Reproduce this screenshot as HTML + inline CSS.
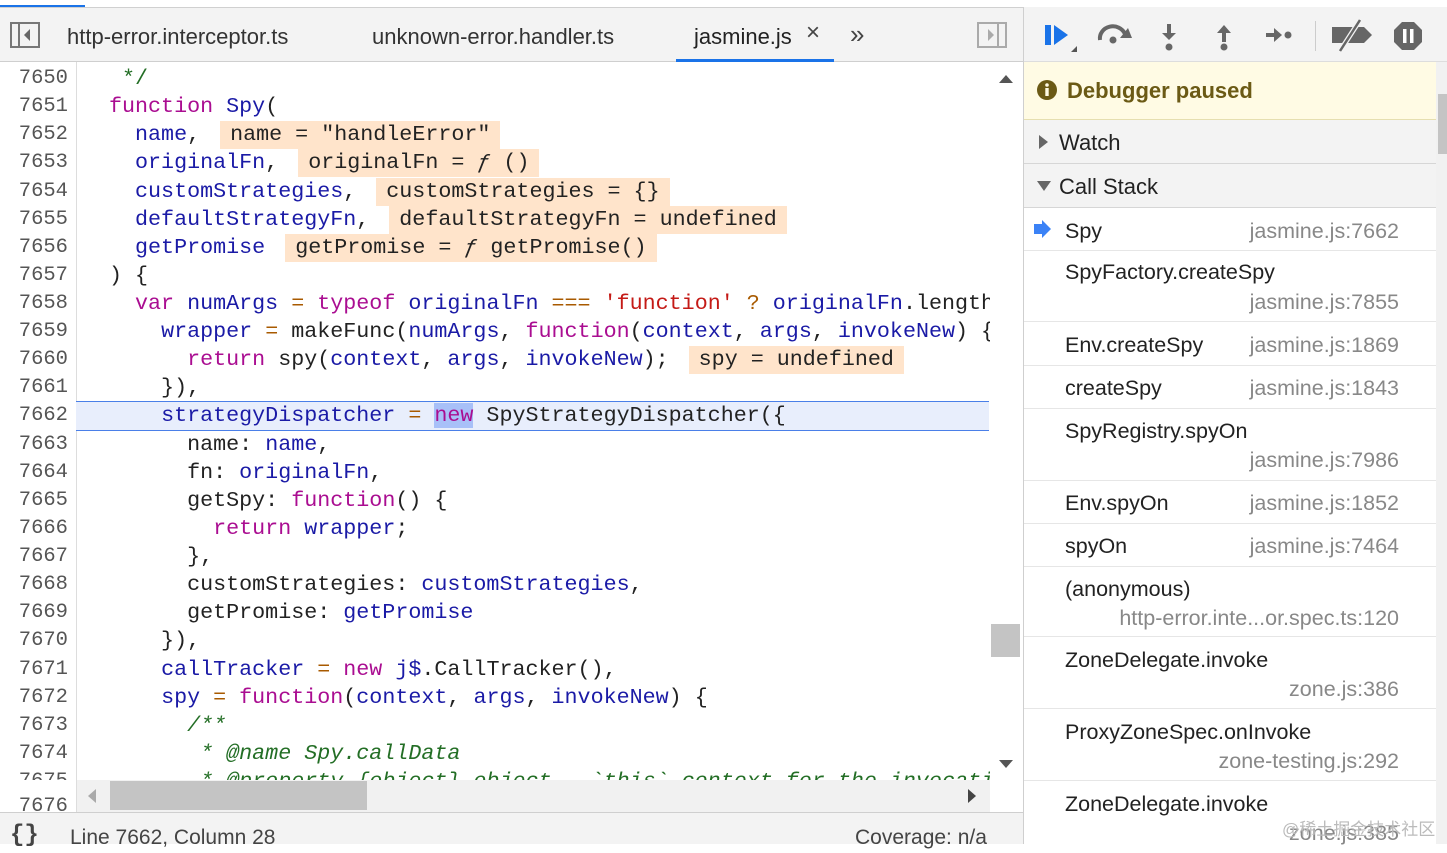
<!DOCTYPE html>
<html><head><meta charset="utf-8">
<style>
*{margin:0;padding:0;box-sizing:border-box}
body{width:1447px;height:844px;overflow:hidden;background:#fff;font-family:"Liberation Sans",sans-serif;position:relative}
.abs{position:absolute}
.tabbar{left:0;top:7px;width:1023px;height:55px;background:#f3f3f3;border-top:1px solid #d0d0d0;border-bottom:1px solid #cfcfcf}
.tab{position:absolute;top:16px;font-size:22px;color:#333}
.code{font-family:"Liberation Mono",monospace;font-size:21.7px;color:#222}
.ln{position:absolute;left:0;width:68px;text-align:right;color:#555;font-family:"Liberation Mono",monospace;font-size:20.5px;height:28px;line-height:28px}
.cl{position:absolute;left:109px;height:28px;line-height:28px;white-space:pre}
.k{color:#aa0d91}.v{color:#1a1aa6}.o{color:#a85a00}.s{color:#c41a16}.c{color:#236e25}.ci{color:#236e25;font-style:italic}
.iv{display:inline-block;background:#ffe4cb;height:28px;padding:0 10px;margin-left:20px;color:#222}
.rp{left:1023px;top:7px;width:424px;height:837px;border-left:1px solid #cfcfcf;background:#fff}
.sec{position:absolute;left:0;width:412px;background:#f3f3f3;border-bottom:1px solid #d6d6d6;font-size:22px;color:#222}
.item{position:absolute;left:0;width:412px;border-bottom:1px solid #e6e6e6;font-size:21.5px;color:#222}
.item .n{position:absolute;left:41px}
.item .l{position:absolute;right:37px;color:#888}
</style></head><body>
<div class="abs" style="left:0;top:5px;width:85px;height:3px;background:#1a73e8"></div>
<div class="abs tabbar">
 <svg class="abs" style="left:10px;top:14px" width="30" height="26"><rect x="1" y="1" width="28" height="24" fill="none" stroke="#777" stroke-width="2"/><line x1="9" y1="1" x2="9" y2="25" stroke="#777" stroke-width="2"/><path d="M20 7 L14 13 L20 19Z" fill="#666"/></svg>
 <div class="tab" style="left:67px">http-error.interceptor.ts</div>
 <div class="tab" style="left:372px">unknown-error.handler.ts</div>
 <div class="tab" style="left:694px;color:#222">jasmine.js</div>
 <div class="tab" style="left:806px;top:11px;font-size:24px;color:#444">×</div>
 <div class="tab" style="left:850px;top:11px;font-size:26px;color:#444">»</div>
 <div class="abs" style="left:676px;top:51px;width:158px;height:3px;background:#1a73e8"></div>
 <svg class="abs" style="left:977px;top:14px" width="30" height="26"><rect x="1" y="1" width="28" height="24" fill="none" stroke="#aaa" stroke-width="2"/><line x1="21" y1="1" x2="21" y2="25" stroke="#aaa" stroke-width="2"/><path d="M11 7 L17 13 L11 19Z" fill="#aaa"/></svg>
</div>

<div class="abs" style="left:76px;top:62px;width:1px;height:751px;background:#ddd"></div>
<div class="abs" style="left:76px;top:401px;width:913px;height:30px;background:#e8eefc;border-top:1.5px solid #4a7fe8;border-bottom:1.5px solid #4a7fe8"></div>

<div class="abs code" style="left:0;top:62px;width:990px;height:718px;overflow:hidden">
<div style="position:absolute;left:0;top:3px;width:990px;height:760px">
<div class="ln" style="top:0">7650</div><div class="cl" style="top:0"><span class="c"> */</span></div>
<div class="ln" style="top:28.1px">7651</div><div class="cl" style="top:28.1px"><span class="k">function</span> <span class="v">Spy</span>(</div>
<div class="ln" style="top:56.2px">7652</div><div class="cl" style="top:56.2px">  <span class="v">name</span>,<span class="iv">name = "handleError"</span></div>
<div class="ln" style="top:84.4px">7653</div><div class="cl" style="top:84.4px">  <span class="v">originalFn</span>,<span class="iv">originalFn = <i>ƒ</i> ()</span></div>
<div class="ln" style="top:112.5px">7654</div><div class="cl" style="top:112.5px">  <span class="v">customStrategies</span>,<span class="iv">customStrategies = {}</span></div>
<div class="ln" style="top:140.6px">7655</div><div class="cl" style="top:140.6px">  <span class="v">defaultStrategyFn</span>,<span class="iv">defaultStrategyFn = undefined</span></div>
<div class="ln" style="top:168.7px">7656</div><div class="cl" style="top:168.7px">  <span class="v">getPromise</span><span class="iv">getPromise = <i>ƒ</i> getPromise()</span></div>
<div class="ln" style="top:196.8px">7657</div><div class="cl" style="top:196.8px">) {</div>
<div class="ln" style="top:225px">7658</div><div class="cl" style="top:225px">  <span class="k">var</span> <span class="v">numArgs</span> <span class="o">=</span> <span class="k">typeof</span> <span class="v">originalFn</span> <span class="o">===</span> <span class="s">'function'</span> <span class="o">?</span> <span class="v">originalFn</span>.length</div>
<div class="ln" style="top:253.1px">7659</div><div class="cl" style="top:253.1px">    <span class="v">wrapper</span> <span class="o">=</span> makeFunc(<span class="v">numArgs</span>, <span class="k">function</span>(<span class="v">context</span>, <span class="v">args</span>, <span class="v">invokeNew</span>) {</div>
<div class="ln" style="top:281.2px">7660</div><div class="cl" style="top:281.2px">      <span class="k">return</span> spy(<span class="v">context</span>, <span class="v">args</span>, <span class="v">invokeNew</span>);<span class="iv">spy = undefined</span></div>
<div class="ln" style="top:309.3px">7661</div><div class="cl" style="top:309.3px">    }),</div>
<div class="ln" style="top:337.4px">7662</div><div class="cl" style="top:337.4px">    <span class="v">strategyDispatcher</span> <span class="o">=</span> <span class="k" style="background:#a8c0f8">new</span> SpyStrategyDispatcher({</div>
<div class="ln" style="top:365.6px">7663</div><div class="cl" style="top:365.6px">      name: <span class="v">name</span>,</div>
<div class="ln" style="top:393.7px">7664</div><div class="cl" style="top:393.7px">      fn: <span class="v">originalFn</span>,</div>
<div class="ln" style="top:421.8px">7665</div><div class="cl" style="top:421.8px">      getSpy: <span class="k">function</span>() {</div>
<div class="ln" style="top:449.9px">7666</div><div class="cl" style="top:449.9px">        <span class="k">return</span> <span class="v">wrapper</span>;</div>
<div class="ln" style="top:478px">7667</div><div class="cl" style="top:478px">      },</div>
<div class="ln" style="top:506.2px">7668</div><div class="cl" style="top:506.2px">      customStrategies: <span class="v">customStrategies</span>,</div>
<div class="ln" style="top:534.3px">7669</div><div class="cl" style="top:534.3px">      getPromise: <span class="v">getPromise</span></div>
<div class="ln" style="top:562.4px">7670</div><div class="cl" style="top:562.4px">    }),</div>
<div class="ln" style="top:590.5px">7671</div><div class="cl" style="top:590.5px">    <span class="v">callTracker</span> <span class="o">=</span> <span class="k">new</span> <span class="v">j$</span>.CallTracker(),</div>
<div class="ln" style="top:618.6px">7672</div><div class="cl" style="top:618.6px">    <span class="v">spy</span> <span class="o">=</span> <span class="k">function</span>(<span class="v">context</span>, <span class="v">args</span>, <span class="v">invokeNew</span>) {</div>
<div class="ln" style="top:646.8px">7673</div><div class="cl" style="top:646.8px">      <span class="ci">/**</span></div>
<div class="ln" style="top:674.9px">7674</div><div class="cl" style="top:674.9px">       <span class="ci">* @name Spy.callData</span></div>
<div class="ln" style="top:703px">7675</div><div class="cl" style="top:703px">       <span class="ci">* @property {object} object - `this` context for the invocation</span></div>
</div>
</div>
<div class="abs" style="left:0;top:795px;width:76px;height:18px;overflow:hidden"><div class="ln" style="top:-2px">7676</div></div>

<div class="abs" style="left:990px;top:62px;width:32px;height:718px;background:#fff"></div>
<svg class="abs" style="left:998px;top:73px" width="16" height="12"><path d="M1 10 L8 2 L15 10Z" fill="#555"/></svg>
<svg class="abs" style="left:998px;top:758px" width="16" height="12"><path d="M1 2 L8 10 L15 2Z" fill="#555"/></svg>
<div class="abs" style="left:991px;top:624px;width:29px;height:33px;background:#c4c4c4"></div>
<div class="abs" style="left:77px;top:780px;width:913px;height:32px;background:#f1f1f1"></div>
<svg class="abs" style="left:86px;top:788px" width="12" height="16"><path d="M10 1 L2 8 L10 15Z" fill="#aaa"/></svg>
<svg class="abs" style="left:966px;top:788px" width="12" height="16"><path d="M2 1 L10 8 L2 15Z" fill="#444"/></svg>
<div class="abs" style="left:110px;top:781px;width:257px;height:29px;background:#c4c4c4"></div>
<div class="abs" style="left:0;top:812px;width:1023px;height:32px;background:#f3f3f3;border-top:1px solid #cfcfcf"></div>
<div class="abs" style="left:10px;top:822px;font-size:24px;font-weight:bold;color:#444;font-family:'Liberation Mono',monospace">{}</div>
<div class="abs" style="left:70px;top:826px;font-size:21px;color:#444">Line 7662, Column 28</div>
<div class="abs" style="left:855px;top:826px;font-size:21px;color:#444">Coverage: n/a</div>

<div class="abs rp">
 <div class="abs" style="left:0;top:0;width:424px;height:55px;background:#f3f3f3;border-bottom:1px solid #ddd"></div>
 <svg class="abs" style="left:18px;top:12px" width="400" height="36">
  <rect x="3" y="6" width="6" height="20" fill="#1a73e8"/><path d="M12 6 L26 16 L12 26Z" fill="#1a73e8"/><path d="M29 33 L35 27 L35 33Z" fill="#555"/>
  <path d="M58 21 A13 12 0 0 1 83 15" fill="none" stroke="#666" stroke-width="4"/><path d="M78 19 L90 19 L86 9Z" fill="#666"/><circle cx="71" cy="21" r="3.5" fill="#666"/>
  <rect x="125" y="5" width="4" height="10" fill="#666"/><path d="M120 14 L134 14 L127 21Z" fill="#666"/><circle cx="127" cy="28" r="3.5" fill="#666"/>
  <rect x="180" y="13" width="4" height="10" fill="#666"/><path d="M175 14 L189 14 L182 6Z" fill="#666"/><circle cx="182" cy="28" r="3.5" fill="#666"/>
  <rect x="224" y="14" width="10" height="4" fill="#666"/><path d="M232 9 L240 16 L232 23Z" fill="#666"/><circle cx="246" cy="16" r="3.5" fill="#666"/>
  <rect x="273" y="2" width="1" height="30" fill="#ccc"/>
  <path d="M290 8 L322 8 L330 16 L322 24 L290 24Z" fill="#666"/><line x1="298" y1="32" x2="318" y2="1" stroke="#f3f3f3" stroke-width="5"/><line x1="298" y1="32" x2="318" y2="1" stroke="#666" stroke-width="2.5"/>
  <path d="M360 3 L372 3 L380 11 L380 23 L372 31 L360 31 L352 23 L352 11Z" fill="#666"/><rect x="361" y="10" width="3.5" height="14" fill="#fff"/><rect x="368" y="10" width="3.5" height="14" fill="#fff"/>
 </svg>
 <div class="abs" style="left:0;top:55px;width:412px;height:58px;background:#fffbe4;border-bottom:1px solid #e6dfb0"></div>
 <svg class="abs" style="left:13px;top:73px" width="20" height="20"><circle cx="10" cy="10" r="10" fill="#6b5a15"/><rect x="8.3" y="8" width="3.4" height="8" fill="#fffbe4"/><circle cx="10" cy="5" r="1.8" fill="#fffbe4"/></svg>
 <div class="abs" style="left:43px;top:71px;font-size:22px;font-weight:bold;color:#6b5a15">Debugger paused</div>
 <div class="sec" style="top:113px;height:44px"><svg class="abs" style="left:14px;top:14px" width="12" height="16"><path d="M1 1 L10 8 L1 15Z" fill="#666"/></svg><span class="abs" style="left:35px;top:10px">Watch</span></div>
 <div class="sec" style="top:157px;height:44px"><svg class="abs" style="left:12px;top:16px" width="16" height="12"><path d="M1 1 L15 1 L8 11Z" fill="#666"/></svg><span class="abs" style="left:35px;top:10px">Call Stack</span></div>
 <div class="item" style="top:201px;height:43px"><svg class="abs" style="left:10px;top:12px" width="18" height="18"><path d="M0 4 L8 4 L8 0 L17 9 L8 18 L8 14 L0 14Z" fill="#3b82f6"/></svg><span class="n" style="top:11px">Spy</span><span class="l" style="top:11px">jasmine.js:7662</span></div>
 <div class="item" style="top:244px;height:71px"><span class="n" style="top:9px">SpyFactory.createSpy</span><span class="l" style="top:39px">jasmine.js:7855</span></div>
 <div class="item" style="top:315px;height:44px"><span class="n" style="top:11px">Env.createSpy</span><span class="l" style="top:11px">jasmine.js:1869</span></div>
 <div class="item" style="top:359px;height:43px"><span class="n" style="top:10px">createSpy</span><span class="l" style="top:10px">jasmine.js:1843</span></div>
 <div class="item" style="top:402px;height:72px"><span class="n" style="top:10px">SpyRegistry.spyOn</span><span class="l" style="top:39px">jasmine.js:7986</span></div>
 <div class="item" style="top:474px;height:43px"><span class="n" style="top:10px">Env.spyOn</span><span class="l" style="top:10px">jasmine.js:1852</span></div>
 <div class="item" style="top:517px;height:43px"><span class="n" style="top:10px">spyOn</span><span class="l" style="top:10px">jasmine.js:7464</span></div>
 <div class="item" style="top:560px;height:70px"><span class="n" style="top:10px">(anonymous)</span><span class="l" style="top:39px">http-error.inte...or.spec.ts:120</span></div>
 <div class="item" style="top:630px;height:72px"><span class="n" style="top:11px">ZoneDelegate.invoke</span><span class="l" style="top:40px">zone.js:386</span></div>
 <div class="item" style="top:702px;height:72px"><span class="n" style="top:11px">ProxyZoneSpec.onInvoke</span><span class="l" style="top:40px">zone-testing.js:292</span></div>
 <div class="item" style="top:774px;height:72px;border:none"><span class="n" style="top:11px">ZoneDelegate.invoke</span><span class="l" style="top:40px">zone.js:385</span></div>
 <div class="abs" style="left:258px;top:808px;font-size:17px;color:#bbb;font-family:'Liberation Sans','Noto Sans CJK SC',sans-serif">@稀土掘金技术社区</div>
 <div class="abs" style="left:412px;top:55px;width:12px;height:782px;background:#f1f1f1"></div>
 <div class="abs" style="left:414px;top:87px;width:9px;height:60px;background:#c4c4c4"></div>
</div>
</body></html>
